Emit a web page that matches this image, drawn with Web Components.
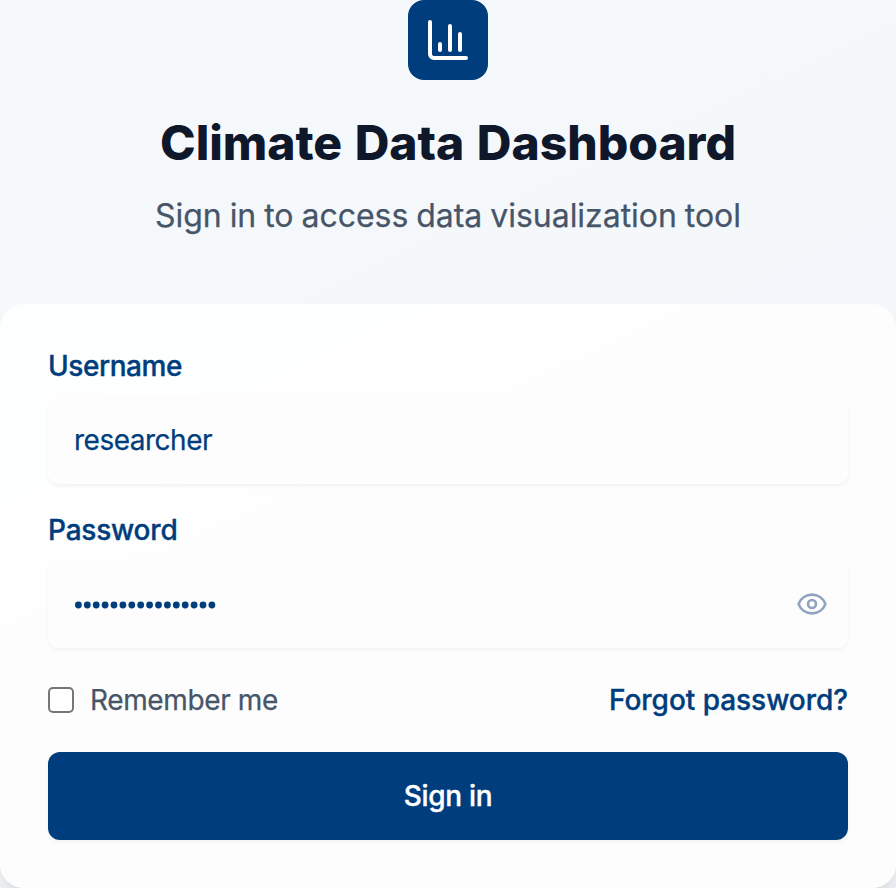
<!DOCTYPE html>
<html lang="en"><head><meta charset="utf-8"><title>Climate Data Dashboard</title>
<style>
html,body{margin:0;height:888px;overflow:hidden}
body{font-family:Inter,"Liberation Sans",sans-serif;color:#0f172a}
</style></head><body>
<login-page></login-page>
<script>
function define(name, html, setup){
  const t=document.createElement('template');t.innerHTML=html;
  customElements.define(name,class extends HTMLElement{
    constructor(){super();this.attachShadow({mode:'open'}).append(t.content.cloneNode(true));}
    connectedCallback(){if(setup)setup(this,this.shadowRoot);}
  });
}
define('app-logo',`<style>:host{display:grid;place-items:center;width:80px;height:80px;border-radius:16px;background:#003d7d}svg{display:block}</style>
<svg width="48" height="48" viewBox="0 0 24 24" fill="none" stroke="#fff" stroke-width="2" stroke-linecap="round" stroke-linejoin="round"><path d="M3 3v16a2 2 0 0 0 2 2h16"/><path d="M18 17V9M13 17V5M8 17v-3"/></svg>`);
// Letter spacing is derived from the requested text width.
define('fit-text',`<style>:host{display:block;white-space:nowrap}span{display:inline-block}</style><span><slot></slot></span>`,(el,root)=>{
  const s=root.querySelector('span'),n=el.textContent.length,w=parseFloat(el.getAttribute('width'));
  s.style.letterSpacing=((w-s.getBoundingClientRect().width)/n)+'px';
});
define('page-header',`<style>:host{display:flex;flex-direction:column;align-items:center;height:304px}
h1{margin:31px 0 0;font-size:48px;line-height:64px;font-weight:800;color:#0f172a;word-spacing:2px}
p{margin:17px 0 0;font-size:32px;line-height:48px;color:#475569;word-spacing:-1px;-webkit-text-stroke:.25px #475569}</style>
<app-logo></app-logo><h1><fit-text width="576">Climate Data Dashboard</fit-text></h1><p><fit-text width="586">Sign in to access data visualization tool</fit-text></p>`);
define('text-field',`<style>:host{display:block;color:#003d7d}
.label{font-size:28px;line-height:28px;font-weight:500;height:44px;-webkit-text-stroke:.35px #003d7d}
.box{box-sizing:border-box;height:88px;border:2px solid #fefefe;border-radius:12px;background:#fdfdfdcc;padding:0 20px 0 24px;display:flex;align-items:center;justify-content:space-between;box-shadow:0 2px 4px rgba(0,0,0,.05);font-size:28px;-webkit-text-stroke:.25px #003d7d}</style>
<div class="label"><slot name="label"></slot></div><div class="box"><slot></slot><slot name="action"></slot></div>`);
define('password-dots',`<style>:host{display:block;margin-top:2px}svg{display:block}</style><svg width="144" height="8" fill="#003d7d"></svg>`,(el,root)=>{
  root.querySelector('svg').innerHTML=Array.from({length:16},(_,i)=>`<circle cx="${4.4+i*8.9}" cy="4" r="3.4"/>`).join('');
});
define('eye-icon',`<style>:host{display:block;margin-right:-2px}svg{display:block}</style>
<svg width="32" height="32" viewBox="0 0 24 24" fill="none" stroke="#91a3bf" stroke-width="2" stroke-linecap="round" stroke-linejoin="round"><path d="M2.062 12.348a1 1 0 0 1 0-.696 10.75 10.75 0 0 1 19.876 0 1 1 0 0 1 0 .696 10.75 10.75 0 0 1-19.876 0"/><circle cx="12" cy="12" r="3"/></svg>`);
define('check-option',`<style>:host{display:flex;align-items:center;gap:16px;color:#475569;-webkit-text-stroke:.25px #475569}i{box-sizing:border-box;width:26px;height:26px;border:2px solid #767676;border-radius:5px;background:#fff}</style><i></i><slot></slot>`);
define('primary-button',`<style>:host{display:block}button{display:flex;align-items:center;justify-content:center;width:100%;height:88px;padding:0;border:0;border-radius:12px;background:#003d7d;color:#fff;font:500 28px Inter,sans-serif;-webkit-text-stroke:.35px #fff;box-shadow:0 2px 4px rgba(0,0,0,.05)}</style><button><slot></slot></button>`);
define('login-card',`<style>:host{box-sizing:border-box;display:flex;flex-direction:column;height:584px;padding:48px;border-radius:24px;background:linear-gradient(155deg,#fdffff 0,#fefefe 32%,#fdfdfd 34%);box-shadow:0 20px 30px -6px rgba(0,0,0,.1),0 8px 12px -8px rgba(0,0,0,.1)}
text-field+text-field{margin-top:32px}
.row{display:flex;justify-content:space-between;align-items:center;height:40px;margin:32px 0;font-size:28px}
.link{color:#003d7d;font-weight:500;-webkit-text-stroke:.35px #003d7d}</style>
<text-field><fit-text slot="label" width="134">Username</fit-text><fit-text width="138">researcher</fit-text></text-field>
<text-field><fit-text slot="label" width="129.5">Password</fit-text><password-dots></password-dots><eye-icon slot="action"></eye-icon></text-field>
<div class="row"><check-option><fit-text width="188">Remember me</fit-text></check-option><fit-text class="link" width="239">Forgot password?</fit-text></div>
<primary-button><fit-text width="88.5">Sign in</fit-text></primary-button>`);
define('login-page',`<style>:host{display:block;height:888px;background:linear-gradient(155deg,#f5f9fc,#f4f8fb 35%,#f1f5f9)}</style><page-header></page-header><login-card></login-card>`);
</script></body></html>
